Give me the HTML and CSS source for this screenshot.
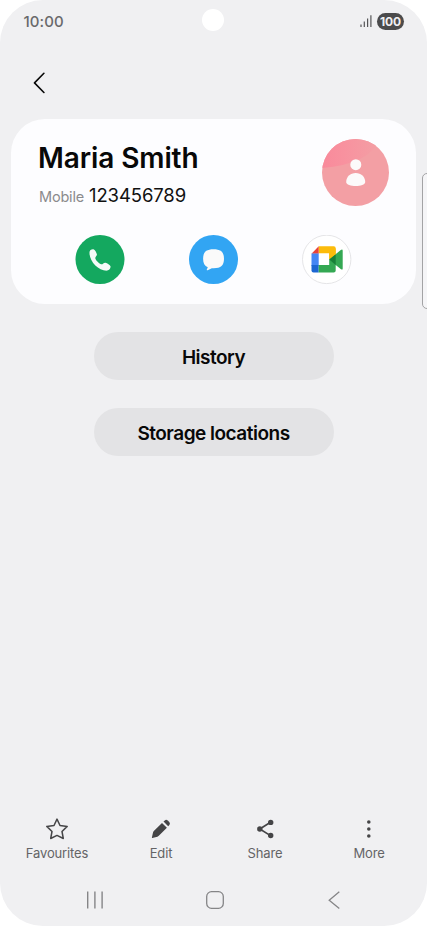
FILE: index.html
```html
<!DOCTYPE html>
<html lang="en">
<head>
<meta charset="utf-8">
<title>Contact</title>
<link rel="stylesheet" href="styles.css">
</head>
<body>
<div class="screen">
  <header class="status">
    <span class="time">10:00</span>
    <span class="camera"></span>
    <span class="indicators">
      <svg class="signal" width="12" height="12" viewBox="0 0 12 12"><path d="M1 9.5V12M4.3 6.5V12M7.6 3.5V12M10.9 0.3V12" stroke="#555557" stroke-width="1.2"/></svg>
      <span class="battery">100</span>
    </span>
  </header>
  <nav class="topbar">
    <svg width="12" height="22" viewBox="0 0 12 22" fill="none" stroke="#080808" stroke-width="1.6" stroke-linecap="round" stroke-linejoin="round"><path d="M10.9 1.3 1.5 10.9 10.9 20.5"/></svg>
  </nav>
  <main>
    <section class="card">
      <div class="person">
        <div>
          <h1>Maria Smith</h1>
          <p class="phone"><span class="label">Mobile</span><span class="number">123456789</span></p>
        </div>
        <svg class="avatar" width="67" height="67" viewBox="0 0 67 67">
          <defs>
            <clipPath id="disc"><circle cx="33.5" cy="33.5" r="33.5"/></clipPath>
            <linearGradient id="glow" x1="0" y1="0" x2="1" y2="0"><stop offset="0" stop-color="#f98a9b"/><stop offset=".4" stop-color="#f8929f"/><stop offset="1" stop-color="#f39fa4"/></linearGradient>
          </defs>
          <g clip-path="url(#disc)">
            <rect width="67" height="67" fill="#f39fa4"/>
            <path d="M0 0H58Q48 25 0 29Z" fill="url(#glow)"/>
          </g>
          <circle cx="33.8" cy="25.7" r="5.5" fill="#fcfafa"/>
          <path d="M24.2 43C24.2 37.8 28.3 34 33.7 34S43.2 37.8 43.2 43C43.2 48.4 24.2 48.4 24.2 43Z" fill="#fcfafa"/>
        </svg>
      </div>
      <div class="actions">
        <svg width="50" height="49" viewBox="0 0 50 49">
          <circle cx="25" cy="24.5" r="24.5" fill="#14a85f"/>
          <path transform="translate(.5)" d="M14 17.2C14 15.1 16.3 13.8 18 14.2C19.5 14.6 21 17.6 21.4 19.3C21.7 20.8 19.7 21.9 19.8 23.2C20 25 24 29 25.8 29.3C27.2 29.5 28.4 27.4 30 27.7C31.7 28.1 34.6 29.8 35 31.3C35.4 33 33.8 35.5 31.8 35.6C23.2 36.2 13.5 26.4 14 17.2Z" fill="#f5faf7"/>
        </svg>
        <svg width="49" height="49" viewBox="0 0 49 49">
          <circle cx="24.5" cy="24.5" r="24.5" fill="#32a5f3"/>
          <path d="M24.5 14.2C32 14.2 35 17 35 23.8S32 33.3 24.7 33.3H22.8L18.7 35.2C18 35.6 17.5 35 17.9 34.2L18.8 32.3C15.6 31 14.1 28.3 14.1 23.8C14.1 17 17.1 14.2 24.5 14.2Z" fill="#fafafa"/>
        </svg>
        <svg width="50" height="50" viewBox="0 0 50 50">
          <circle cx="24.7" cy="24.4" r="24.2" fill="#fff" stroke="#e2e2e4" stroke-width=".9"/>
          <path d="M16.7 11.3H31.7Q33.7 11.3 33.7 13.3V25L27.2 24V18.3H16.7Z" fill="#fcbc0b"/>
          <path d="M16.7 11.3V18.8H9.5Z" fill="#e8433a"/>
          <path d="M9.5 18.6H16.7V31H9.5Z" fill="#4486f4"/>
          <path d="M9.5 30H16.7V37.4H11.5Q9.5 37.4 9.5 35.4Z" fill="#1c66d2"/>
          <path d="M16.7 30H27.2V24.5L38.8 14.9Q40.7 13.6 40.7 15.7V33.4Q40.7 35.3 39 34.2L33.7 30V35.4Q33.7 37.4 31.7 37.4H16.7Z" fill="#34a853"/>
          <path d="M33.7 13.3V19.4L27.2 24.6V18.3Z" fill="#fcbc0b"/>
          <path d="M27.2 24.6 33.7 19.2V30Z" fill="#188038"/>
        </svg>
      </div>
    </section>
    <div class="buttons">
      <button type="button">History</button>
      <button type="button" class="storage">Storage locations</button>
    </div>
  </main>
  <footer>
    <div class="toolbar">
      <div class="tool fav">
        <svg width="24" height="24" viewBox="0 0 24 24" fill="none" stroke="#454547" stroke-width="1.5" stroke-linejoin="round"><path d="M12 2.1 15 8.5 22.2 9.4 17 14.5 18.3 21.5 12 18.4 5.7 21.5 7 14.5 1.8 9.4 9 8.5Z"/></svg>
        <span>Favourites</span>
      </div>
      <div class="tool edit">
        <svg width="24" height="24" viewBox="0 0 24 24" fill="#454547"><path d="M3.3 20.9C3.1 21.1 2.8 21 2.9 20.6L4 15.4Q4.2 14.7 4.8 14.1L13 5.9 17.9 10.7 9.8 18.8Q9.1 19.5 8.4 19.7Z"/><path d="M14.5 4.6 15.8 3.4Q17.2 2.2 18.7 3.5L20.3 5.1Q21.5 6.5 20.4 7.9L19.2 9.3Z"/></svg>
        <span>Edit</span>
      </div>
      <div class="tool share">
        <svg width="24" height="24" viewBox="0 0 24 24" fill="#454547"><path d="M17.5 5.3 6.8 12 17.5 18.6" fill="none" stroke="#454547" stroke-width="1.7"/><circle cx="17.7" cy="5.4" r="2.7"/><circle cx="6.8" cy="12" r="2.7"/><circle cx="17.7" cy="18.5" r="2.7"/></svg>
        <span>Share</span>
      </div>
      <div class="tool more">
        <svg width="24" height="24" viewBox="0 0 24 24" fill="#454547"><circle cx="11.8" cy="5" r="1.8"/><circle cx="11.8" cy="12" r="1.8"/><circle cx="11.8" cy="19" r="1.8"/></svg>
        <span>More</span>
      </div>
    </div>
    <div class="navbar">
      <svg width="18" height="18" viewBox="0 0 18 18" stroke="#858587" stroke-width="1.4"><path d="M1.7 .5V17.5M8.9 .5V17.5M16.1 .5V17.5"/></svg>
      <svg width="18" height="18" viewBox="0 0 18 18" fill="none" stroke="#858587" stroke-width="1.3"><rect x=".7" y=".7" width="16.6" height="16.6" rx="4.8"/></svg>
      <svg width="12" height="18" viewBox="0 0 12 18" fill="none" stroke="#858587" stroke-width="1.3"><path d="M11.3 .7 1.2 9.2 11.3 17.5"/></svg>
    </div>
  </footer>
  <div class="edge"></div>
</div>
</body>
</html>
```
FILE: styles.css
```css
* { box-sizing: border-box; }
body { margin: 0; background: #fff; font-family: Inter, Roboto, "Liberation Sans", sans-serif; }
.screen { position: relative; display: flex; flex-direction: column; width: 427px; height: 926px; overflow: hidden; background: #f0f0f2; border-radius: 43px; }
svg { display: block; flex: none; }
.status { display: grid; grid-template-columns: 179px 22px 1fr; align-items: center; height: 42px; padding: 0 23px 2px; }
.time { font-size: 15px; font-weight: 500; letter-spacing: .1px; color: #69696b; padding: 2px 0 0 .5px; }
.camera { width: 22px; height: 22px; border-radius: 50%; background: #fff; }
.indicators { display: flex; justify-content: flex-end; align-items: center; gap: 5px; padding-top: 2px; }
.battery { width: 27px; height: 17px; border-radius: 8.5px; background: #4b4b4c; color: #f0f0f2; font-size: 12px; line-height: 17px; font-weight: 700; text-align: center; letter-spacing: -.2px; }
.topbar { height: 77px; padding: 30px 33px 0; }
main { flex: 1; }
.card { width: 405px; height: 185px; margin-left: 11px; border-radius: 34px; background: #fdfdff; padding: 20px 27px 0 27px; }
.person { display: flex; justify-content: space-between; height: 96px; }
h1 { margin: 1px 0 0; font-size: 28px; line-height: 36px; font-weight: 600; letter-spacing: -.1px; color: #080808; white-space: nowrap; }
.phone { display: flex; align-items: baseline; gap: 5px; margin: 6px 0 0 1px; line-height: 26px; }
.label { color: #8b8b8d; font-size: 14.5px; letter-spacing: -.2px; }
.number { color: #111; font-size: 18.5px; letter-spacing: -.1px; }
.actions { display: flex; justify-content: space-between; padding: 0 37px; }
.buttons { display: flex; flex-direction: column; align-items: center; gap: 28px; padding: 28px 0 0; }
button { width: 240px; height: 48px; padding: 3px 0 0; border: 0; border-radius: 24px; background: #e3e3e5; color: #080808; font: 600 19px/24px Inter, Roboto, sans-serif; letter-spacing: -.5px; }
.toolbar { display: grid; grid-template-columns: repeat(4, 104px); padding-left: 5px; margin-bottom: 29px; }
.tool { display: flex; flex-direction: column; align-items: center; gap: 3px; color: #646466; font-size: 13px; line-height: 18px; letter-spacing: -.15px; }
.navbar { display: flex; justify-content: space-between; height: 35px; padding: 0 87px 0 86px; }
.navbar svg:nth-child(2) { margin-right: 3px; }
.edge { position: absolute; left: 422px; top: 173px; width: 12px; height: 136px; border: 1px solid #a3a3a5; border-radius: 5px; background: #f5f5f7; }
```
